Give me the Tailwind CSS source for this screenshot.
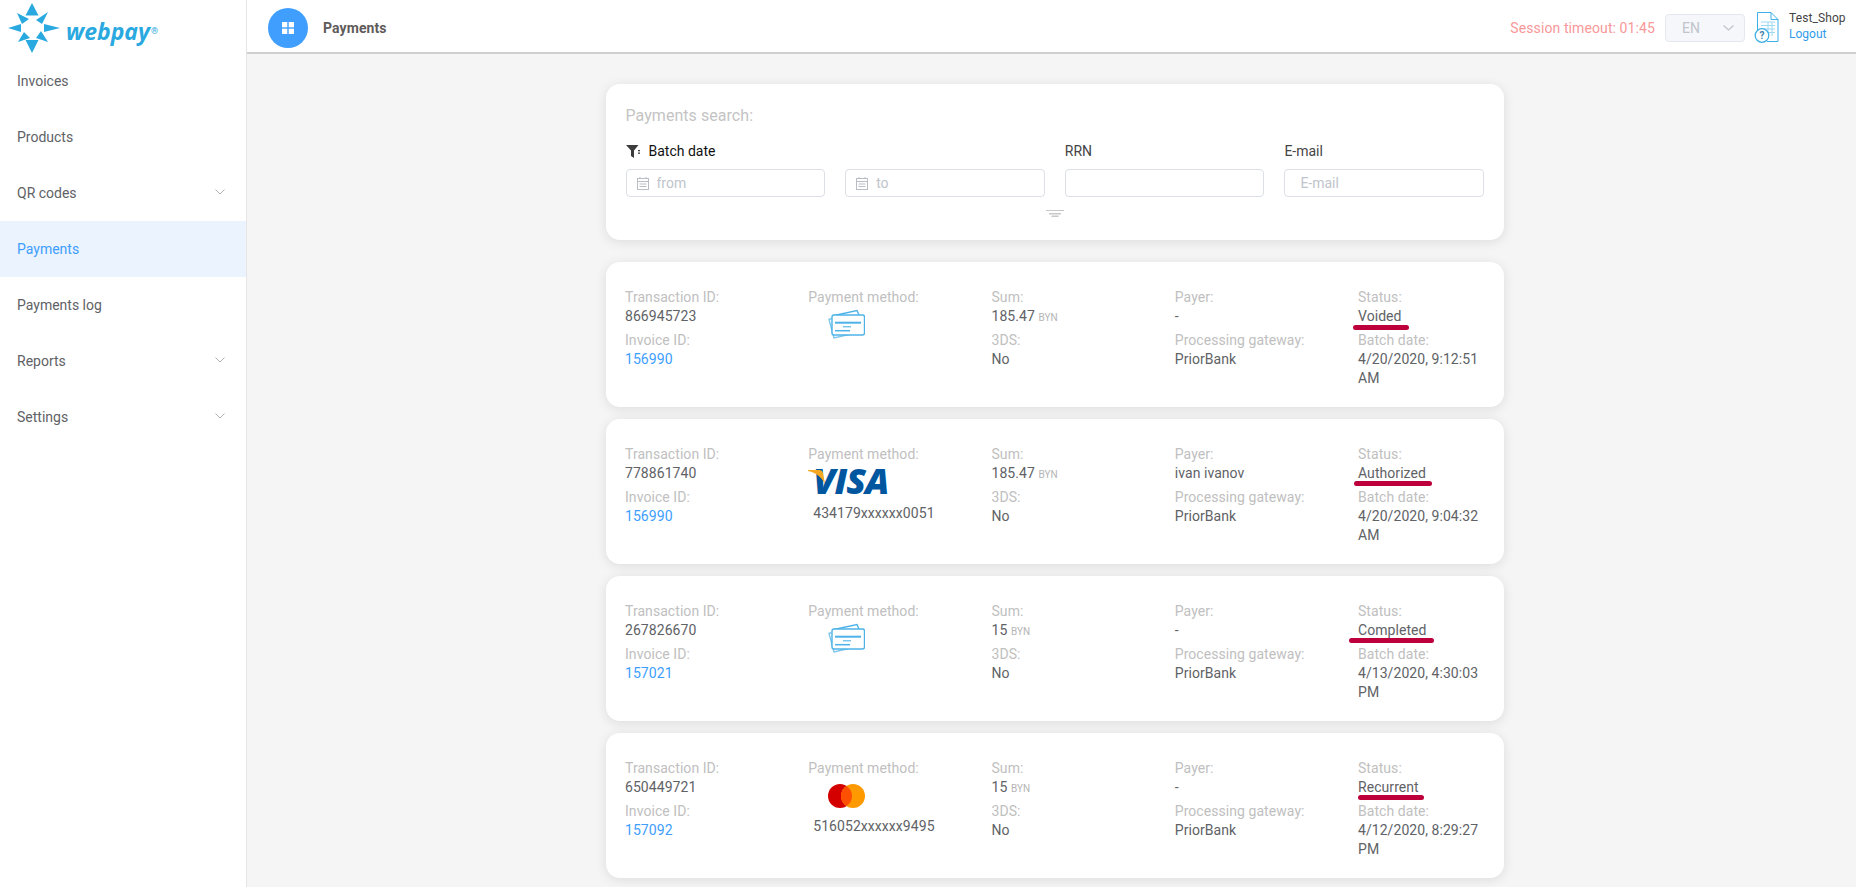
<!DOCTYPE html>
<html lang="en">
<head>
<meta charset="utf-8">
<title>Payments</title>
<script src="https://cdn.jsdelivr.net/npm/@tailwindcss/browser@4"></script>
</head>
<body class="h-[887px] overflow-hidden font-['Roboto',sans-serif] text-[14px] leading-[19px] text-[#606266] bg-[#f5f5f5]">
<div class="flex h-[887px] w-[1856px] overflow-hidden">
  <aside class="w-[247px] shrink-0 bg-white border-r border-[#e6e6e6]">
    <div class="h-[53px] flex items-start relative">
      <svg class="absolute left-0 top-0" width="64" height="56" viewBox="0 0 64 56" fill="#2aa9e0">
        <polygon points="32,3 25.5,15.5 38.5,15.5"/>
        <polygon points="32,53 25.5,40 38.5,40"/>
        <polygon points="8,28 21,24 21,32"/>
        <polygon points="60,28 44,24 44,32"/>
        <polygon points="48,12 36,20 42,24"/>
        <polygon points="17,13 29,19 22,24"/>
        <polygon points="18,42 24,32 30,38"/>
        <polygon points="48,42 36,38 41,31"/>
      </svg>
      <span class="absolute left-[66px] top-[16px] font-['Open_Sans',sans-serif] font-bold italic text-[23px] leading-[30px] text-[#2aa9e0]">webpay</span>
      <span class="absolute left-[151px] top-[26px] text-[9px] leading-[10px] text-[#2aa9e0]">®</span>
    </div>
    <nav>
      <a class="h-[56px] flex items-center px-[17px]">Invoices</a>
      <a class="h-[56px] flex items-center px-[17px]">Products</a>
      <a class="h-[56px] flex items-center justify-between pl-[17px] pr-[21px]">QR codes
        <svg width="10" height="6" viewBox="0 0 10 6" fill="none" stroke="#b0b0b0" class="-mt-[2px]"><path d="M0.5 0.5 5 5 9.5 0.5"/></svg></a>
      <a class="h-[56px] flex items-center px-[17px] bg-[#ebf3fe] text-[#409eff]">Payments</a>
      <a class="h-[56px] flex items-center px-[17px]">Payments log</a>
      <a class="h-[56px] flex items-center justify-between pl-[17px] pr-[21px]">Reports
        <svg width="10" height="6" viewBox="0 0 10 6" fill="none" stroke="#b0b0b0" class="-mt-[2px]"><path d="M0.5 0.5 5 5 9.5 0.5"/></svg></a>
      <a class="h-[56px] flex items-center justify-between pl-[17px] pr-[21px]">Settings
        <svg width="10" height="6" viewBox="0 0 10 6" fill="none" stroke="#b0b0b0" class="-mt-[2px]"><path d="M0.5 0.5 5 5 9.5 0.5"/></svg></a>
    </nav>
  </aside>

  <div class="flex-1 min-w-0 flex flex-col">
    <header class="h-[54px] shrink-0 bg-white border-b-2 border-[#cfcfcf] flex items-center pt-1 pl-[21px] pr-[5px]">
      <div class="w-10 h-10 rounded-full bg-[#409eff] flex items-center justify-center">
        <svg width="12" height="12" viewBox="0 0 12 12" fill="#fff"><rect width="5.3" height="5.3"/><rect x="6.7" width="5.3" height="5.3"/><rect y="6.7" width="5.3" height="5.3"/><rect x="6.7" y="6.7" width="5.3" height="5.3"/></svg>
      </div>
      <h1 class="ml-[15px] font-bold text-[14px] text-[#5f5b5b] tracking-[0.1px]">Payments</h1>
      <span class="ml-auto text-[#f89898] tracking-[0.1px]">Session timeout: 01:45</span>
      <div class="ml-[10px] w-[80px] h-[28px] rounded-[4px] border border-[#e4e7ed] bg-[#f5f7fa] flex items-center justify-between pl-4 pr-[10px] text-[#c0c4cc]">
        <span>EN</span>
        <svg width="11" height="6" viewBox="0 0 11 6" fill="none" stroke="#c0c4cc" stroke-width="1.2"><path d="M0.5 0.5 5.5 5 10.5 0.5"/></svg>
      </div>
      <svg class="ml-[9px] mb-[2px]" width="25" height="31" viewBox="0 0 25 31" fill="none" stroke="#3fb0e8">
        <path d="M3.500 22V.5H17L24 7.500V29.500H13"/>
        <path d="M17 .5V7.500H24"/>
        <path d="M7 10H21M7 13.500H21M7 17H21M7 20.500H21M14 10V24M18 10V24" stroke="#9fd8f3"/>
        <circle cx="8" cy="23.500" r="6.800" fill="#fff" stroke-width="1.300"/>
        <text x="8" y="27" text-anchor="middle" font-size="10" font-weight="700" fill="#3f7fa8" stroke="none" font-family="Roboto">?</text>
      </svg>
      <div class="ml-[10px] w-[54px] mr-[8px] mb-[4px]">
        <div class="text-[12px] leading-[16px] text-[#444] tracking-[0.1px]">Test_Shop</div>
        <div class="text-[12px] leading-[16px] text-[#2f9bea]">Logout</div>
      </div>
    </header>

    <main class="flex-1 pl-[359px] pt-[30px]">
      <div class="w-[898px]">
        <section class="h-[156px] mb-[22px] bg-white rounded-[14px] shadow-[0_2px_12px_0_rgba(0,0,0,0.1)] pt-[21px] pl-[19.5px] pr-[20px]">
          <h2 class="text-[16px] leading-[22px] text-[#c4c4c4] tracking-[0.05px]">Payments search:</h2>
          <div class="grid grid-cols-4 gap-x-5 mt-[15px]">
            <div class="col-span-2 flex items-center h-[19px] text-[#111]">
              <svg width="15" height="13" viewBox="0 0 15 13" fill="#3c3c3c"><path d="M0 0H12.500L8 5.500V13L5 11V5.500Z"/><rect x="12" y="5" width="2" height="1.300"/><rect x="12" y="7.500" width="2" height="1.300"/></svg>
              <span class="ml-[8px]">Batch date</span>
            </div>
            <div class="h-[19px] text-[#444]">RRN</div>
            <div class="h-[19px] text-[#444]">E-mail</div>
            <div class="relative mt-[8px]">
              <svg class="absolute left-[11px] top-[8px]" width="12" height="13" viewBox="0 0 12 13" fill="none" stroke="#b9bdc6"><rect x=".5" y="1.500" width="11" height="11"/><path d="M.5 4.500H11.500M3 0V2M9 0V2M2.500 7H9.500M2.500 9.500H9.500"/></svg>
              <input placeholder="from" class="w-full h-[28px] rounded-[4px] border border-[#dcdfe6] pl-[30px] outline-none placeholder:text-[#c0c4cc]">
            </div>
            <div class="relative mt-[8px]">
              <svg class="absolute left-[11px] top-[8px]" width="12" height="13" viewBox="0 0 12 13" fill="none" stroke="#b9bdc6"><rect x=".5" y="1.500" width="11" height="11"/><path d="M.5 4.500H11.500M3 0V2M9 0V2M2.500 7H9.500M2.500 9.500H9.500"/></svg>
              <input placeholder="to" class="w-full h-[28px] rounded-[4px] border border-[#dcdfe6] pl-[30px] outline-none placeholder:text-[#c0c4cc]">
            </div>
            <div class="mt-[8px]"><input class="w-full h-[28px] rounded-[4px] border border-[#dcdfe6] outline-none"></div>
            <div class="mt-[8px]"><input placeholder="E-mail" class="w-full h-[28px] rounded-[4px] border border-[#dcdfe6] pl-[15px] outline-none placeholder:text-[#c0c4cc]"></div>
          </div>
          <div class="flex justify-center mt-[13px]">
            <svg width="18" height="7" viewBox="0 0 18 7" fill="#c8c8c8"><rect width="18" height="1"/><rect x="3" y="3" width="12" height="1.500"/><rect x="5.500" y="5.500" width="7" height="1.500"/></svg>
          </div>
        </section>

        <div class="flex flex-col gap-3">
          <!-- Card 1 -->
          <article class="h-[145px] bg-white rounded-[14px] shadow-[0_2px_12px_0_rgba(0,0,0,0.1)] pt-[25.5px] pl-[19px] grid grid-cols-[183.25px_183.25px_183.25px_183.25px_127px] tracking-[0.06px]">
            <div>
              <div class="text-[#c0c0c0]">Transaction ID:</div><div>866945723</div>
              <div class="mt-[5.5px] text-[#c0c0c0]">Invoice ID:</div><div class="text-[#409eff]">156990</div>
            </div>
            <div>
              <div class="text-[#c0c0c0]">Payment method:</div>
              <svg class="ml-[20px] mt-[2.5px]" width="37" height="30" viewBox="0 0 37 30" fill="none" stroke="#4db2e8" stroke-width="1.400">
                <path d="M3.500 9.500 1 10.500 6 29 21 25.500" stroke="#7cc6ee"/>
                <path d="M6 6.500 29 1.500 31 6"/>
                <rect x="4" y="6" width="32.500" height="20" rx="2" fill="#fff"/>
                <path d="M7 13.700H33" stroke-width="2"/><path d="M15 17.700H23" stroke-width="1.500" stroke="#7cc6ee"/><path d="M7 21.700H22" stroke-width="1.500"/>
              </svg>
            </div>
            <div>
              <div class="text-[#c0c0c0]">Sum:</div><div>185.47 <span class="text-[10px] leading-none text-[#b5b5b5]">BYN</span></div>
              <div class="mt-[5.5px] text-[#c0c0c0]">3DS:</div><div>No</div>
            </div>
            <div>
              <div class="text-[#c0c0c0]">Payer:</div><div>-</div>
              <div class="mt-[5.5px] text-[#c0c0c0]">Processing gateway:</div><div>PriorBank</div>
            </div>
            <div>
              <div class="text-[#c0c0c0]">Status:</div>
              <div class="relative">Voided<span class="absolute left-[-5px] top-[18px] w-[56px] h-[5px] rounded-full bg-[#bd003b]"></span></div>
              <div class="mt-[5.5px] text-[#c0c0c0]">Batch date:</div><div>4/20/2020, 9:12:51 AM</div>
            </div>
          </article>

          <!-- Card 2 -->
          <article class="h-[145px] bg-white rounded-[14px] shadow-[0_2px_12px_0_rgba(0,0,0,0.1)] pt-[25.5px] pl-[19px] grid grid-cols-[183.25px_183.25px_183.25px_183.25px_127px] tracking-[0.06px]">
            <div>
              <div class="text-[#c0c0c0]">Transaction ID:</div><div>778861740</div>
              <div class="mt-[5.5px] text-[#c0c0c0]">Invoice ID:</div><div class="text-[#409eff]">156990</div>
            </div>
            <div>
              <div class="text-[#c0c0c0]">Payment method:</div>
              <div class="relative h-[33.5px] w-[85px]">
                <span class="absolute left-[5px] top-[3px] font-['Open_Sans',sans-serif] font-extrabold italic text-[36px] leading-[28px] tracking-[-1px] text-[#00569f]">VISA</span>
                <svg class="absolute left-0 top-[6.5px]" width="24" height="15" viewBox="0 0 24 15" fill="#f7a823"><path d="M0 0H11C13.500 0 14.500 1 15 3L17 14C13.500 7 8 2.500 0 1Z"/></svg>
              </div>
              <div class="ml-[5px] mt-[7px]">434179xxxxxx0051</div>
            </div>
            <div>
              <div class="text-[#c0c0c0]">Sum:</div><div>185.47 <span class="text-[10px] leading-none text-[#b5b5b5]">BYN</span></div>
              <div class="mt-[5.5px] text-[#c0c0c0]">3DS:</div><div>No</div>
            </div>
            <div>
              <div class="text-[#c0c0c0]">Payer:</div><div>ivan ivanov</div>
              <div class="mt-[5.5px] text-[#c0c0c0]">Processing gateway:</div><div>PriorBank</div>
            </div>
            <div>
              <div class="text-[#c0c0c0]">Status:</div>
              <div class="relative">Authorized<span class="absolute left-[-4px] top-[17px] w-[78px] h-[5px] rounded-full bg-[#bd003b]"></span></div>
              <div class="mt-[5.5px] text-[#c0c0c0]">Batch date:</div><div>4/20/2020, 9:04:32 AM</div>
            </div>
          </article>

          <!-- Card 3 -->
          <article class="h-[145px] bg-white rounded-[14px] shadow-[0_2px_12px_0_rgba(0,0,0,0.1)] pt-[25.5px] pl-[19px] grid grid-cols-[183.25px_183.25px_183.25px_183.25px_127px] tracking-[0.06px]">
            <div>
              <div class="text-[#c0c0c0]">Transaction ID:</div><div>267826670</div>
              <div class="mt-[5.5px] text-[#c0c0c0]">Invoice ID:</div><div class="text-[#409eff]">157021</div>
            </div>
            <div>
              <div class="text-[#c0c0c0]">Payment method:</div>
              <svg class="ml-[20px] mt-[2.5px]" width="37" height="30" viewBox="0 0 37 30" fill="none" stroke="#4db2e8" stroke-width="1.400">
                <path d="M3.500 9.500 1 10.500 6 29 21 25.500" stroke="#7cc6ee"/>
                <path d="M6 6.500 29 1.500 31 6"/>
                <rect x="4" y="6" width="32.500" height="20" rx="2" fill="#fff"/>
                <path d="M7 13.700H33" stroke-width="2"/><path d="M15 17.700H23" stroke-width="1.500" stroke="#7cc6ee"/><path d="M7 21.700H22" stroke-width="1.500"/>
              </svg>
            </div>
            <div>
              <div class="text-[#c0c0c0]">Sum:</div><div>15 <span class="text-[10px] leading-none text-[#b5b5b5]">BYN</span></div>
              <div class="mt-[5.5px] text-[#c0c0c0]">3DS:</div><div>No</div>
            </div>
            <div>
              <div class="text-[#c0c0c0]">Payer:</div><div>-</div>
              <div class="mt-[5.5px] text-[#c0c0c0]">Processing gateway:</div><div>PriorBank</div>
            </div>
            <div>
              <div class="text-[#c0c0c0]">Status:</div>
              <div class="relative">Completed<span class="absolute left-[-9px] top-[17px] w-[85px] h-[5px] rounded-full bg-[#bd003b]"></span></div>
              <div class="mt-[5.5px] text-[#c0c0c0]">Batch date:</div><div>4/13/2020, 4:30:03 PM</div>
            </div>
          </article>

          <!-- Card 4 -->
          <article class="h-[145px] bg-white rounded-[14px] shadow-[0_2px_12px_0_rgba(0,0,0,0.1)] pt-[25.5px] pl-[19px] grid grid-cols-[183.25px_183.25px_183.25px_183.25px_127px] tracking-[0.06px]">
            <div>
              <div class="text-[#c0c0c0]">Transaction ID:</div><div>650449721</div>
              <div class="mt-[5.5px] text-[#c0c0c0]">Invoice ID:</div><div class="text-[#409eff]">157092</div>
            </div>
            <div>
              <div class="text-[#c0c0c0]">Payment method:</div>
              <svg class="ml-[20px] mt-[6.5px]" width="37" height="24" viewBox="0 0 37 24">
                <circle cx="12" cy="12" r="12" fill="#d40000"/>
                <circle cx="25" cy="12" r="12" fill="#ff9900"/>
                <path d="M18.500 1.900A12 12 0 0 1 18.500 22.100A12 12 0 0 1 18.500 1.900Z" fill="#ff4f00"/>
              </svg>
              <div class="ml-[5px] mt-[8.5px]">516052xxxxxx9495</div>
            </div>
            <div>
              <div class="text-[#c0c0c0]">Sum:</div><div>15 <span class="text-[10px] leading-none text-[#b5b5b5]">BYN</span></div>
              <div class="mt-[5.5px] text-[#c0c0c0]">3DS:</div><div>No</div>
            </div>
            <div>
              <div class="text-[#c0c0c0]">Payer:</div><div>-</div>
              <div class="mt-[5.5px] text-[#c0c0c0]">Processing gateway:</div><div>PriorBank</div>
            </div>
            <div>
              <div class="text-[#c0c0c0]">Status:</div>
              <div class="relative">Recurrent<span class="absolute left-0 top-[17px] w-[66px] h-[5px] rounded-full bg-[#bd003b]"></span></div>
              <div class="mt-[5.5px] text-[#c0c0c0]">Batch date:</div><div>4/12/2020, 8:29:27 PM</div>
            </div>
          </article>
        </div>
      </div>
    </main>
  </div>
</div>
</body>
</html>
